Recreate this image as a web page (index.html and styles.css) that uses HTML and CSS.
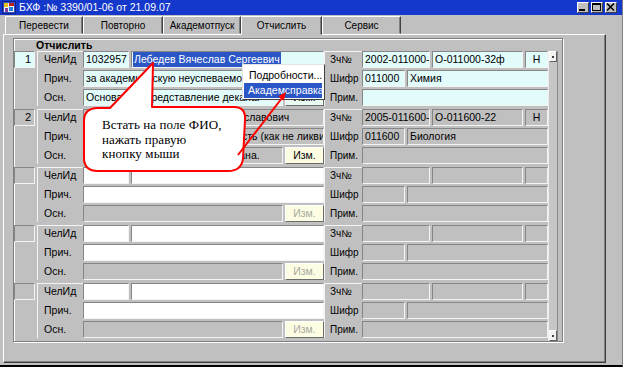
FILE: index.html
```html
<!DOCTYPE HTML>
<html>
<head>
  <meta charset="utf-8">
  <link rel="stylesheet" href="styles.css">
</head>
<body>
<div class="window">
  <div class="titlebar">
    <svg class="appicon" width="14" height="13" viewBox="0 0 14 13">
      <rect x="0.5" y="0.5" width="13" height="12" fill="#3050c8" stroke="#10208a"/>
      <rect x="2" y="2" width="10" height="9" fill="#f4f4f4"/>
      <rect x="2" y="2" width="4" height="4" fill="#e8c020"/>
      <rect x="7" y="2" width="5" height="3" fill="#c02020"/>
      <rect x="3" y="7" width="3" height="4" fill="#8040a0"/>
      <rect x="7" y="6" width="4" height="4" fill="#2080e0"/>
    </svg>
    <span class="title">БХФ :№ 3390/01-06 от 21.09.07</span>
    <div class="winbtns">
      <span class="wbtn"><svg width="10" height="9" viewBox="0 0 10 9"><rect x="1" y="6" width="6" height="2" fill="#000"/></svg></span>
      <span class="wbtn"><svg width="10" height="9" viewBox="0 0 10 9"><rect x="0.5" y="0.5" width="8" height="7" fill="none" stroke="#000"/><rect x="0" y="0" width="9" height="2" fill="#000"/></svg></span>
      <span class="wbtn"><svg width="10" height="9" viewBox="0 0 10 9"><path d="M1 0.5 L8 7.5 M8 0.5 L1 7.5" stroke="#000" stroke-width="1.6"/></svg></span>
    </div>
  </div>

  <div class="tabs">
    <div class="tab t1">Перевести</div>
    <div class="tab t2">Повторно</div>
    <div class="tab t3">Академотпуск</div>
    <div class="tab t4 active">Отчислить</div>
    <div class="tab t5">Сервис</div>
  </div>

  <div class="page">
    <div class="group">
      <div class="group-title">Отчислить</div>
      <div class="list">
        <div class="records">

          <div class="rec">
            <div class="num"><span class="cell cy">1</span></div>
            <div class="lbls"><span>ЧелИд</span><span>Прич.</span><span>Осн.</span></div>
            <div class="flds">
              <div class="row"><span class="f cy w-id">1032957</span><span class="f cy grow"><span class="sel">Лебедев Вячеслав Сергеевич</span></span></div>
              <div class="row"><span class="f cy grow">за академическую неуспеваемость (как не</span></div>
              <div class="row"><span class="f cy grow">Основание: представление декана.</span><span class="btn cy">Изм.</span></div>
            </div>
            <div class="lbls r"><span>Зч№</span><span>Шифр</span><span>Прим.</span></div>
            <div class="flds">
              <div class="row"><span class="f cy w-z1">2002-011000-1</span><span class="f cy w-z2">О-011000-32ф</span><span class="f cy w-n">Н</span></div>
              <div class="row"><span class="f cy w-sh">011000</span><span class="f cy grow">Химия</span></div>
              <div class="row"><span class="f cy grow"></span></div>
            </div>
          </div>

          <div class="rec">
            <div class="num"><span class="cell">2</span></div>
            <div class="lbls"><span>ЧелИд</span><span>Прич.</span><span>Осн.</span></div>
            <div class="flds">
              <div class="row"><span class="f w-id">1034518</span><span class="f grow">Семенов Андрей Вячеславович</span></div>
              <div class="row"><span class="f grow">за академическую неуспеваемость (как не ликви</span></div>
              <div class="row"><span class="f grow">Основание: представление декана.</span><span class="btn">Изм.</span></div>
            </div>
            <div class="lbls r"><span>Зч№</span><span>Шифр</span><span>Прим.</span></div>
            <div class="flds">
              <div class="row"><span class="f w-z1">2005-011600-2</span><span class="f w-z2">О-011600-22</span><span class="f w-n">Н</span></div>
              <div class="row"><span class="f w-sh">011600</span><span class="f grow">Биология</span></div>
              <div class="row"><span class="f grow"></span></div>
            </div>
          </div>

          <div class="rec">
            <div class="num"><span class="cell"></span></div>
            <div class="lbls"><span>ЧелИд</span><span>Прич.</span><span>Осн.</span></div>
            <div class="flds">
              <div class="row"><span class="f wh w-id"></span><span class="f wh grow"></span></div>
              <div class="row"><span class="f wh grow"></span></div>
              <div class="row"><span class="f grow"></span><span class="btn dis">Изм.</span></div>
            </div>
            <div class="lbls r"><span>Зч№</span><span>Шифр</span><span>Прим.</span></div>
            <div class="flds">
              <div class="row"><span class="f w-z1"></span><span class="f w-z2"></span><span class="f w-n"></span></div>
              <div class="row"><span class="f w-sh"></span><span class="f grow"></span></div>
              <div class="row"><span class="f grow"></span></div>
            </div>
          </div>

          <div class="rec">
            <div class="num"><span class="cell"></span></div>
            <div class="lbls"><span>ЧелИд</span><span>Прич.</span><span>Осн.</span></div>
            <div class="flds">
              <div class="row"><span class="f wh w-id"></span><span class="f wh grow"></span></div>
              <div class="row"><span class="f wh grow"></span></div>
              <div class="row"><span class="f grow"></span><span class="btn dis">Изм.</span></div>
            </div>
            <div class="lbls r"><span>Зч№</span><span>Шифр</span><span>Прим.</span></div>
            <div class="flds">
              <div class="row"><span class="f w-z1"></span><span class="f w-z2"></span><span class="f w-n"></span></div>
              <div class="row"><span class="f w-sh"></span><span class="f grow"></span></div>
              <div class="row"><span class="f grow"></span></div>
            </div>
          </div>

          <div class="rec">
            <div class="num"><span class="cell"></span></div>
            <div class="lbls"><span>ЧелИд</span><span>Прич.</span><span>Осн.</span></div>
            <div class="flds">
              <div class="row"><span class="f wh w-id"></span><span class="f wh grow"></span></div>
              <div class="row"><span class="f wh grow"></span></div>
              <div class="row"><span class="f grow"></span><span class="btn dis">Изм.</span></div>
            </div>
            <div class="lbls r"><span>Зч№</span><span>Шифр</span><span>Прим.</span></div>
            <div class="flds">
              <div class="row"><span class="f w-z1"></span><span class="f w-z2"></span><span class="f w-n"></span></div>
              <div class="row"><span class="f w-sh"></span><span class="f grow"></span></div>
              <div class="row"><span class="f grow"></span></div>
            </div>
          </div>

        </div>
        <div class="vscroll">
          <span class="sbtn"><i></i></span>
          <span class="sbtn"><i></i></span>
        </div>
      </div>
    </div>
  </div>

  <!-- context menu over the first record -->
  <div class="ctxmenu">
    <div class="mi">Подробности...</div>
    <div class="mi hot">Академсправка</div>
  </div>

  <!-- callout and arrow -->
  <svg class="overlay" width="623" height="367" viewBox="0 0 623 367">
    <path d="M98 108 L110 108 L153 63 L152 107 L234 107 Q246 107 245 120 L243 158 Q242 171 228 171 L98 171 Q84 171 84 158 L84 121 Q84 108 98 108 Z" fill="#fff" stroke="#f00" stroke-width="2" stroke-linejoin="round"/>
    <line x1="238" y1="155" x2="282" y2="98" stroke="#f00" stroke-width="2"/>
    <polygon points="286,92 283.9,100.4 278.3,96.2" fill="#f00"/>
  </svg>
  <div class="callout-text">Встать на поле ФИО,<br>нажать правую<br>кнопку мыши</div>
</div>
</body>
</html>
```

FILE: styles.css
```css
body {margin: 0; font-family: "Liberation Sans", Arial, sans-serif; font-size: 10.5px; color: #000;}

.window {
  position: relative;
  width: 623px;
  height: 367px;
  box-sizing: border-box;
  background: #c0c0c0;
  border-bottom: 2px solid #000;
  border-right: 1px solid #808080;
  display: flex;
  flex-direction: column;
  overflow: hidden;
}

/* title bar */
.titlebar {height: 15px; background: #1538cc; color: #fff; display: flex; align-items: center; padding: 0 5px 0 2px;}
.appicon {display: block;}
.title {margin-left: 3px; font-size: 10.5px; line-height: 15px;}
.winbtns {margin-left: auto; display: flex; gap: 2px;}
.wbtn {
  width: 12px; height: 11px; box-sizing: border-box;
  background: #c0c0c0;
  border: 1px solid; border-color: #fff #404040 #404040 #fff;
  display: flex; align-items: center; justify-content: center;
}
.wbtn svg {display: block;}

/* tabs */
.tabs {height: 19px; box-sizing: border-box; padding: 1px 0 0 5px; display: flex; position: relative; z-index: 1;}
.tab {
  box-sizing: border-box;
  height: 18px;
  border: 1px solid; border-color: #fff #404040 transparent #fff;
  box-shadow: inset -1px 0 0 #808080;
  font-size: 10px; line-height: 17px; text-align: center;
  background: #c0c0c0;
}
.t1 {width: 78px;}
.t2 {width: 80px;}
.t3 {width: 78px;}
.t4 {width: 81px;}
.t5 {width: 79px;}
.tab.active {height: 19px; margin-bottom: -1px;}

/* tab page */
.page {
  flex: 1;
  margin: 0 16px 2px 3px;
  border: 1px solid; border-color: #fff #404040 #404040 #fff;
  box-shadow: inset -1px -1px 0 #808080;
}
.group {
  width: 550px; height: 304px; box-sizing: border-box;
  margin: 3px 0 0 9px;
  border: 1px solid #808080;
  box-shadow: inset 1px 1px 0 #fff, 1px 1px 0 #fff;
}
.group-title {height: 12px; line-height: 12px; padding-left: 22px; font-weight: bold;}
.list {display: flex;}
.records {width: 534px; display: flex; flex-direction: column;}

/* one record */
.rec {
  display: grid;
  grid-template-columns: 22px 47px 241px 38px 186px;
  height: 58px;
  box-sizing: border-box;
  padding-bottom: 3px;
}
.num .cell {
  display: block; width: 21px; height: 17px; box-sizing: border-box;
  border: 1px solid; border-color: #868686 #f4f4f4 #f4f4f4 #868686;
  text-align: right; padding-right: 3px; line-height: 15px; font-size: 11px;
}
.lbls {display: flex; flex-direction: column; gap: 2px; padding-left: 7px; margin-left: 1px; box-shadow: inset 1px 1px 0 #f4f4f4;}
.lbls span {line-height: 17px; white-space: nowrap;}
.lbls.r {padding-left: 6px; margin-left: 0; font-size: 10px;}
.flds {display: flex; flex-direction: column; gap: 2px;}
.row {display: flex; gap: 2px; height: 17px;}

.f {
  box-sizing: border-box; height: 17px;
  border: 1px solid; border-color: #868686 #f4f4f4 #f4f4f4 #868686;
  background: #c0c0c0;
  padding: 0 2px; line-height: 15px;
  white-space: nowrap; overflow: hidden;
}
.cy {background: #e2fbfb;}
.wh {background: #fff;}
.grow {flex: 1;}
.w-id {width: 46px;}
.w-z1 {width: 68px;}
.w-z2 {width: 91px;}
.w-n {width: 23px; text-align: center;}
.w-sh {width: 43px;}
.sel {display: inline-block; height: 15px; background: #2a56c6; color: #fff; margin-left: -1px; padding: 0 1px;}

.btn {
  box-sizing: border-box; width: 39px; height: 17px;
  border: 1px solid; border-color: #fff #6c6c6c #6c6c6c #fff;
  background: #fdfde4;
  text-align: center; line-height: 15px;
}
.btn.cy {background: #eafcf2;}
.btn.dis {color: #aaa9a0;}

/* scrollbar */
.vscroll {
  width: 10px; height: 290px; box-sizing: border-box;
  background: #c6c6c6;
  border-left: 1px solid #ececec; border-right: 1px solid #8a8a8a;
  display: flex; flex-direction: column; justify-content: space-between;
}
.sbtn {
  height: 11px; box-sizing: border-box;
  background: #f2f2ee;
  border: 1px solid; border-color: #fff #606060 #606060 #fff;
  display: flex; align-items: center; justify-content: center;
}
.sbtn i {width: 2px; height: 2px; background: #404040;}

/* popup menu */
.ctxmenu {
  position: absolute; left: 242px; top: 64px; width: 83px;
  box-sizing: border-box;
  background: #fff;
  border: 1px solid; border-color: #e4e4e4 #404040 #404040 #e4e4e4;
  padding: 2px 2px 1px 1px;
}
.mi {height: 16px; line-height: 16px; padding-left: 5px; white-space: nowrap;}
.mi.hot {height: 15px; line-height: 15px; background: #2a56c6; color: #fff; padding-left: 4px;}

/* callout */
.overlay {position: absolute; left: 0; top: 0; pointer-events: none;}
.callout-text {
  position: absolute; left: 102px; top: 118px;
  font-family: "Liberation Serif", "Times New Roman", serif;
  font-size: 13px; line-height: 14.5px; letter-spacing: 0.1px;
}
```
